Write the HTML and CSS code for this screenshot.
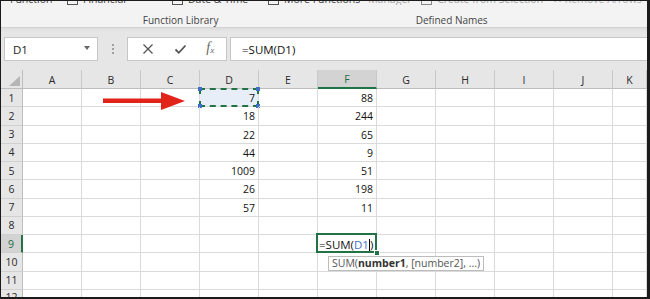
FILE: index.html
```html
<!DOCTYPE html>
<html lang="en">
<head>
  <meta charset="UTF-8">
  <title>SUM formula</title>
  <link rel="stylesheet" href="styles.css">
</head>
<body>

  <div class="screen">

    <div class="ribbon">
      <div class="ribbon-group lib">
        <div class="ribbon-cmds">
          <span>Function</span>
          <span class="cmd"><i class="ico"></i>Financial</span>
          <span class="cmd"><i class="ico"></i>Date &amp; Time</span>
          <span class="cmd"><i class="ico"></i>More Functions</span>
        </div>
        <div class="group-label">Function Library</div>
      </div>
      <div class="ribbon-sep"></div>
      <div class="ribbon-group names">
        <div class="ribbon-cmds">
          <span>Manager</span>
          <span class="cmd"><i class="ico"></i>Create from Selection</span>
        </div>
        <div class="group-label">Defined Names</div>
      </div>
      <div class="ribbon-sep"></div>
      <div class="ribbon-group audit">
        <div class="ribbon-cmds">
          <span>&#10005; Remove Arrows</span>
        </div>
      </div>
    </div>

    <div class="formula-bar">
      <div class="name-box">
        <span>D1</span>
        <span class="drop"></span>
      </div>
      <div class="grip"><i></i><i></i><i></i></div>
      <div class="fx-buttons">
        <svg width="12" height="12" viewBox="0 0 12 12">
          <path d="M1.5 1.5 L10.5 10.5 M10.5 1.5 L1.5 10.5" stroke="#555" stroke-width="1.3" fill="none"/>
        </svg>
        <svg width="13" height="12" viewBox="0 0 13 12">
          <path d="M1.5 6.5 L4.8 9.8 L11.5 2.5" stroke="#555" stroke-width="1.8" fill="none"/>
        </svg>
        <span class="fx">f<sub>x</sub></span>
      </div>
      <div class="formula-input">=SUM(D1)</div>
    </div>

    <div class="sheet" id="sheet"></div>

  </div>

  <script>
    const letters = ["A", "B", "C", "D", "E", "F", "G", "H", "I", "J", "K"];
    const data = {
      D: [7, 18, 22, 44, 1009, 26, 57],
      F: [88, 244, 65, 9, 51, 198, 11]
    };

    function makeCell(className, text) {
      const el = document.createElement("div");
      el.className = className;
      if (text !== undefined) el.innerText = text;
      return el;
    }

    function renderSheet() {
      const sheet = document.getElementById("sheet");
      const corner = makeCell("corner");
      corner.appendChild(makeCell("select-all"));
      sheet.appendChild(corner);

      letters.forEach(l => {
        const head = makeCell("col-head", l);
        if (l === "F") head.classList.add("active-head");
        sheet.appendChild(head);
      });

      for (let r = 1; r <= 12; r++) {
        const rowHead = makeCell("row-head", r);
        if (r === 9) rowHead.classList.add("active-head");
        sheet.appendChild(rowHead);

        letters.forEach(l => {
          const values = data[l];
          const cell = makeCell("cell", values && values[r - 1] !== undefined ? values[r - 1] : "");

          if (l === "D" && r === 1) {
            cell.classList.add("ref");
            cell.innerHTML = '7<span class="ants"></span>' +
              '<span class="knob tl"></span><span class="knob tr"></span>' +
              '<span class="knob bl"></span><span class="knob br"></span>';
          }

          if (l === "F" && r === 9) {
            cell.classList.add("editing");
            cell.innerHTML = '<span class="edit-text">=SUM(<span class="ref-text">D1</span><i class="cursor"></i>)</span>' +
              '<span class="fill-handle"></span>' +
              '<div class="tip">SUM(<b>number1</b>, [number2], ...)</div>';
          }

          sheet.appendChild(cell);
        });
      }
    }

    renderSheet();
  </script>

  <svg class="arrow" width="84" height="20" viewBox="0 0 84 20">
    <rect x="0" y="7.5" width="62" height="4.5" fill="#e2231a"/>
    <polygon points="58,1 82,10 58,19" fill="#e2231a"/>
  </svg>

</body>
</html>
```

FILE: styles.css
```css
* {
  box-sizing: border-box;
}

body {
  margin: 0;
  font-family: "Open Sans", "Liberation Sans", Arial, sans-serif;
  color: #222;
}

.screen {
  position: relative;
  width: 650px;
  height: 299px;
  border-style: solid;
  border-color: #1b1b1b;
  border-width: 1px 3px 2px 1px;
  background: #e6e6e6;
  display: flex;
  flex-direction: column;
  overflow: hidden;
}

/* ribbon */

.ribbon {
  flex: none;
  display: flex;
  height: 27px;
  background: #f3f3f3;
  border-bottom: 1px solid #d2d2d2;
}

.ribbon-group {
  display: flex;
  flex-direction: column;
}

.lib {
  width: 400px;
}

.names {
  width: 193px;
}

.audit {
  flex: 1;
}

.ribbon-sep {
  width: 1px;
  height: 23px;
  background: #cfcfcf;
}

.ribbon-cmds {
  display: grid;
  grid-template-columns: 57px 105px 96px auto;
  height: 5px;
  overflow: hidden;
  white-space: nowrap;
  font-size: 10.5px;
  color: #444;
}

.ribbon-cmds span {
  display: flex;
  align-items: flex-start;
  margin-top: -9px;
  line-height: 14px;
}

.lib .ribbon-cmds {
  padding-left: 9px;
}

.names .ribbon-cmds {
  grid-template-columns: 53px auto;
  padding-left: 8px;
  color: #a3a3a3;
}

.audit .ribbon-cmds {
  padding-left: 10px;
  color: #b0b0b0;
}

.ico {
  width: 11px;
  height: 11px;
  margin: 3px 5px 0 0;
  border: 1px solid #555;
  border-bottom-width: 2px;
}

.names .ico {
  border-color: #888;
}

.group-label {
  margin-top: 8px;
  text-align: center;
  font-size: 10px;
  color: #444;
}

/* formula bar */

.formula-bar {
  flex: none;
  display: flex;
  height: 42px;
  padding: 9px 0 9px 3px;
  background: linear-gradient(#dedede, #e6e6e6 4px);
}

.name-box {
  width: 94px;
  display: flex;
  align-items: center;
  justify-content: space-between;
  padding: 0 7px 0 8px;
  background: #fff;
  border: 1px solid #c6c6c6;
  font-size: 11.5px;
  color: #222;
}

.drop {
  width: 0;
  height: 0;
  border-left: 3.5px solid transparent;
  border-right: 3.5px solid transparent;
  border-top: 4px solid #666;
  margin-bottom: 3px;
}

.grip {
  width: 29px;
  display: flex;
  flex-direction: column;
  align-items: center;
  justify-content: center;
  gap: 2px;
}

.grip i {
  width: 2px;
  height: 2px;
  background: #a0a0a0;
}

.fx-buttons {
  width: 100px;
  display: flex;
  align-items: center;
  justify-content: space-around;
  padding: 0 2px 0 4px;
  background: #fff;
  border: 1px solid #c6c6c6;
}

.fx {
  font-family: "Liberation Serif", serif;
  font-style: italic;
  font-size: 14px;
  color: #666;
  margin-top: -2px;
}

.fx sub {
  font-size: 9px;
  vertical-align: -1px;
}

.formula-input {
  flex: 1;
  margin-left: 3px;
  display: flex;
  align-items: center;
  padding-left: 11px;
  background: #fff;
  border: 1px solid #c6c6c6;
  border-right: none;
  font-size: 11.5px;
  color: #111;
}

/* sheet */

.sheet {
  flex: 1;
  display: grid;
  grid-template-columns: 22px repeat(10, 59px) 1fr;
  grid-template-rows: 19px repeat(11, 18.27px) 1fr;
  background: #fff;
  font-size: 10.5px;
}

.corner,
.col-head,
.row-head {
  background: #e6e6e6;
  color: #2a2a2a;
}

.corner {
  display: flex;
  align-items: flex-end;
  justify-content: flex-end;
  padding: 0 2px 2px 0;
  border-right: 1px solid #bdbdbd;
  border-bottom: 1px solid #bdbdbd;
}

.select-all {
  width: 11px;
  height: 10px;
  background: #b5b5b5;
  clip-path: polygon(100% 0, 100% 100%, 0 100%);
}

.col-head {
  display: flex;
  align-items: center;
  justify-content: center;
  padding-top: 1px;
  border-right: 1px solid #c8c8c8;
  border-bottom: 1px solid #bdbdbd;
}

.row-head {
  display: flex;
  align-items: center;
  justify-content: center;
  border-right: 1px solid #bdbdbd;
  border-bottom: 1px solid #d0d0d0;
}

.active-head {
  background: #d3d3d3;
  color: #1e6b41;
}

.col-head.active-head {
  border-bottom: 2px solid #217346;
}

.row-head.active-head {
  border-right: 2px solid #217346;
}

.cell {
  position: relative;
  display: flex;
  align-items: center;
  justify-content: flex-end;
  padding: 1px 3px 0 0;
  border-right: 1px solid #dadada;
  border-bottom: 1px solid #dadada;
  color: #111;
}

/* referenced range D1 */

.ref {
  background: #e8eef8;
}

.ants {
  position: absolute;
  inset: -1px;
  border: 2px dashed #217346;
}

.knob {
  position: absolute;
  width: 4px;
  height: 4px;
  background: #3f6fc8;
}

.tl { left: -2px; top: -2px; }
.tr { right: -2px; top: -2px; }
.bl { left: -2px; bottom: -2px; }
.br { right: -2px; bottom: -2px; }

/* editing cell F9 */

.editing {
  justify-content: flex-start;
  padding: 1px 0 0 1px;
  z-index: 2;
}

.editing::before {
  content: "";
  position: absolute;
  inset: -2px -1px -1px -2px;
  border: 2px solid #217346;
}

.edit-text {
  position: relative;
  font-size: 11.5px;
  white-space: nowrap;
  color: #111;
}

.ref-text {
  color: #3f6fc8;
}

.cursor {
  display: inline-block;
  width: 1px;
  height: 12px;
  background: #000;
  vertical-align: -2px;
}

.fill-handle {
  position: absolute;
  right: -4px;
  bottom: -4px;
  width: 6px;
  height: 6px;
  background: #217346;
  border: 1px solid #fff;
}

.tip {
  position: absolute;
  left: 10px;
  top: 21px;
  padding: 0 3px;
  line-height: 13px;
  white-space: nowrap;
  background: #fff;
  border: 1px solid #bcbcbc;
  color: #555;
  font-size: 10.5px;
}

.tip b {
  color: #333;
}

.arrow {
  position: absolute;
  left: 103px;
  top: 91px;
}
```
